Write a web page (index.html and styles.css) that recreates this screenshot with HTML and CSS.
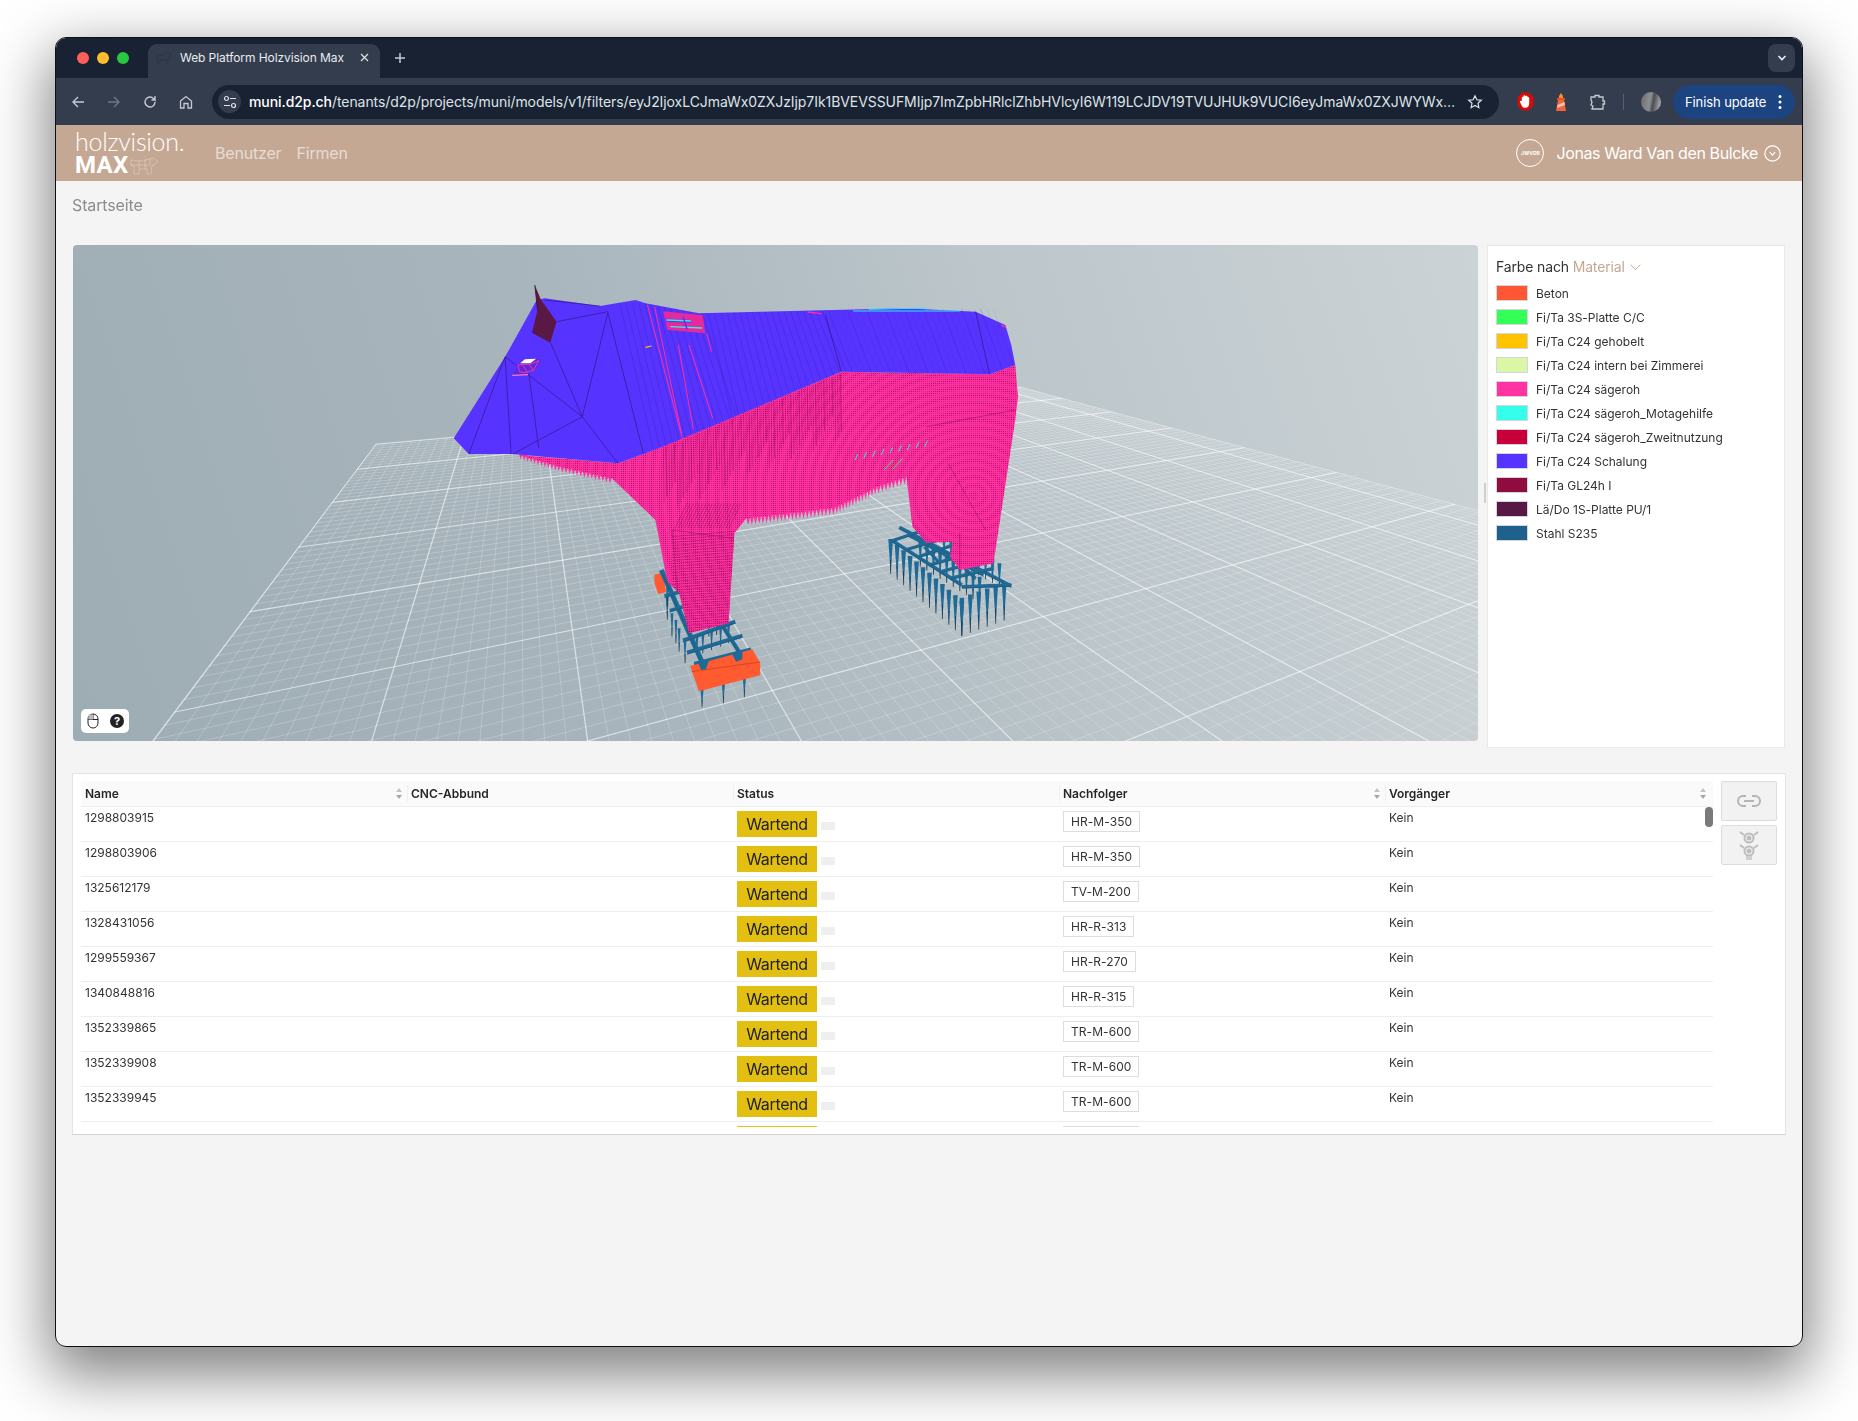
FILE: index.html
```html
<!DOCTYPE html>
<html lang="de">
<head>
<meta charset="utf-8">
<title>Web Platform Holzvision Max</title>
<link rel="stylesheet" href="styles.css">
</head>
<body>
<div class="window">
  <div class="tabstrip">
    <div class="lights"><i class="light red"></i><i class="light yellow"></i><i class="light green"></i></div>
    <div class="tab">
      <svg class="favicon" width="17" height="12" viewBox="0 0 17 12"><path d="M1 3h8l2-2h4l1 3-3 2v5h-2V8H5v3H3V6L1 5z" fill="none" stroke="#2b3442" stroke-width="1"/></svg>
      <span class="tab-title">Web Platform Holzvision Max</span>
      <svg class="tab-close" width="9" height="9" viewBox="0 0 9 9"><path d="M1 1l7 7M8 1l-7 7" stroke="#dfe3e8" stroke-width="1.2"/></svg>
    </div>
    <svg class="newtab" width="12" height="12" viewBox="0 0 12 12"><path d="M6 1v10M1 6h10" stroke="#c4cad3" stroke-width="1.5"/></svg>
    <div class="tab-menu"><svg width="10" height="6" viewBox="0 0 10 6"><path d="M1.5 1L5 4.5 8.500 1" fill="none" stroke="#e8ebef" stroke-width="1.600"/></svg></div>
  </div>
  <div class="toolbar">
    <div class="navs">
      <svg width="16" height="16" viewBox="0 0 16 16"><path d="M14 8H3M8 3L3 8l5 5" fill="none" stroke="#c4cad3" stroke-width="1.400"/></svg>
      <svg width="16" height="16" viewBox="0 0 16 16"><path d="M2 8h11M8 3l5 5-5 5" fill="none" stroke="#6f7886" stroke-width="1.400"/></svg>
      <svg width="16" height="16" viewBox="0 0 16 16"><path d="M13 8a5 5 0 1 1-1.500-3.600L13 6V2M13 6H9.500" fill="none" stroke="#c4cad3" stroke-width="1.400"/></svg>
      <svg width="16" height="16" viewBox="0 0 16 16"><path d="M2.500 7L8 2.500 13.500 7v7H10V9.500H6V14H2.500z" fill="none" stroke="#c4cad3" stroke-width="1.300"/></svg>
    </div>
    <div class="omnibox">
      <span class="tune"><svg width="14" height="14" viewBox="0 0 14 14"><circle cx="3.500" cy="3.500" r="2" fill="none" stroke="#dfe3e8" stroke-width="1.200"/><path d="M7 3.500h6M1 10.500h6" stroke="#dfe3e8" stroke-width="1.200"/><circle cx="10.500" cy="10.500" r="2" fill="none" stroke="#dfe3e8" stroke-width="1.200"/></svg></span>
      <span class="url"><b>muni.d2p.ch</b>/tenants/d2p/projects/muni/models/v1/filters/eyJ2IjoxLCJmaWx0ZXJzIjp7Ik1BVEVSSUFMIjp7ImZpbHRlclZhbHVlcyI6W119LCJDV19TVUJHUk9VUCI6eyJmaWx0ZXJWYWx…</span>
      <svg class="star" width="16" height="16" viewBox="0 0 16 16"><path d="M8 1.800l1.900 4 4.400.5-3.300 3 .9 4.400L8 11.500l-3.900 2.200.9-4.400-3.300-3 4.400-.5z" fill="none" stroke="#dfe3e8" stroke-width="1.200"/></svg>
    </div>
    <div class="extensions">
      <svg width="17" height="19" viewBox="0 0 16 18"><path d="M5 .5h6L15.500 5v8L11 17.500H5L.5 13V5z" fill="#d80a0a"/><path d="M4.500 8.500V5.500a1 1 0 0 1 1.500-.8V4a1 1 0 0 1 2 0v.5a1 1 0 0 1 2 0V5a1 1 0 0 1 1.500.5V11c0 2.500-1.300 4-3.500 4s-3-1-4-3L2.800 9.500c-.4-1 1-1.800 1.700-1z" fill="#fff"/></svg>
      <svg width="14" height="20" viewBox="0 0 14 20"><path d="M7 1l2 3v2H5V4z" fill="#f7941d"/><rect x="3" y="6" width="8" height="2" fill="#e8502a"/><path d="M4 8h6l2 11H2z" fill="#f2643a"/><path d="M3.500 13l7-3 .5 3-8 3z" fill="#fbc4ae"/></svg>
      <svg width="18" height="18" viewBox="0 0 18 18"><path d="M3 4h4V2.500h4V4h4v4h1.500v3H15v5H4l1-3-2-1 1-3-1-2z" fill="none" stroke="#c4cad3" stroke-width="1.300"/></svg>
      <i class="divider"></i>
      <span class="profile"></span>
      <span class="update">Finish update<svg width="4" height="16" viewBox="0 0 4 16"><circle cx="2" cy="2.500" r="1.500" fill="#fff"/><circle cx="2" cy="8" r="1.500" fill="#fff"/><circle cx="2" cy="13.500" r="1.500" fill="#fff"/></svg></span>
    </div>
  </div>
  <header class="appbar">
    <div class="logo">
      <span class="logo-top">holzvision.</span>
      <span class="logo-bottom">MAX<svg width="30" height="18" viewBox="0 0 30 18"><path d="M1 3l8 1 6-1 5-1 3-1 3 2 2 2-4 3-2 0-1 9h-4v-5H9v5H4V9L1 8zM9 4v8M15 3v9M20 2v6M1 8h19" fill="none" stroke="#fff" stroke-opacity=".5" stroke-width=".7" stroke-dasharray="2 .6"/></svg></span>
    </div>
    <nav class="appnav"><a>Benutzer</a><a>Firmen</a></nav>
    <div class="user">
      <span class="avatar">JWVDB</span>
      <span class="username">Jonas Ward Van den Bulcke</span>
      <svg width="17" height="17" viewBox="0 0 17 17"><circle cx="8.500" cy="8.500" r="7.700" fill="none" stroke="#fff" stroke-width="1.200"/><path d="M5.800 7.200l2.700 3 2.700-3" fill="none" stroke="#fff" stroke-width="1.200"/></svg>
    </div>
  </header>
  <main class="main">
    <div class="crumb">Startseite</div>
    <section class="workspace">
      <div class="viewer">
        <canvas id="scene" width="1405" height="496"></canvas>
        <div class="viewer-help">
          <svg width="12" height="16" viewBox="0 0 12 16"><rect x="1" y="1" width="10" height="14" rx="5" fill="#fff" stroke="#222" stroke-width="1"/><path d="M1 6.500h10M6 1v5.500" stroke="#222" stroke-width="1"/><rect x="1.500" y="1.500" width="4.500" height="5" fill="#bbb"/></svg>
          <span class="help-dot">?</span>
        </div>
      </div>
      <div class="splitter"><i></i></div>
      <aside class="legend">
        <div class="legend-head">Farbe nach <span class="legend-pick">Material</span><svg width="11" height="7" viewBox="0 0 11 7"><path d="M.7.700l4.800 5 4.800-5" fill="none" stroke="#c5a893" stroke-width="1"/></svg></div>
        <ul class="legend-list">
          <li><i class="swatch c1"></i>Beton</li>
          <li><i class="swatch c2"></i>Fi/Ta 3S-Platte C/C</li>
          <li><i class="swatch c3"></i>Fi/Ta C24 gehobelt</li>
          <li><i class="swatch c4"></i>Fi/Ta C24 intern bei Zimmerei</li>
          <li><i class="swatch c5"></i>Fi/Ta C24 sägeroh</li>
          <li><i class="swatch c6"></i>Fi/Ta C24 sägeroh_Motagehilfe</li>
          <li><i class="swatch c7"></i>Fi/Ta C24 sägeroh_Zweitnutzung</li>
          <li><i class="swatch c8"></i>Fi/Ta C24 Schalung</li>
          <li><i class="swatch c9"></i>Fi/Ta GL24h I</li>
          <li><i class="swatch c10"></i>Lä/Do 1S-Platte PU/1</li>
          <li><i class="swatch c11"></i>Stahl S235</li>
        </ul>
      </aside>
    </section>
    <section class="table-panel">
      <div class="table">
        <div class="thead">
          <div class="th">Name<i class="sort"></i></div>
          <div class="th">CNC-Abbund</div>
          <div class="th">Status</div>
          <div class="th">Nachfolger<i class="sort"></i></div>
          <div class="th">Vorgänger<i class="sort"></i></div>
        </div>
        <div class="tbody">
          <div class="tr"><div class="td">1298803915</div><div class="td"></div><div class="td status"><span class="wait">Wartend</span><i class="stub"></i></div><div class="td"><span class="code">HR-M-350</span></div><div class="td">Kein</div></div>
          <div class="tr"><div class="td">1298803906</div><div class="td"></div><div class="td status"><span class="wait">Wartend</span><i class="stub"></i></div><div class="td"><span class="code">HR-M-350</span></div><div class="td">Kein</div></div>
          <div class="tr"><div class="td">1325612179</div><div class="td"></div><div class="td status"><span class="wait">Wartend</span><i class="stub"></i></div><div class="td"><span class="code">TV-M-200</span></div><div class="td">Kein</div></div>
          <div class="tr"><div class="td">1328431056</div><div class="td"></div><div class="td status"><span class="wait">Wartend</span><i class="stub"></i></div><div class="td"><span class="code">HR-R-313</span></div><div class="td">Kein</div></div>
          <div class="tr"><div class="td">1299559367</div><div class="td"></div><div class="td status"><span class="wait">Wartend</span><i class="stub"></i></div><div class="td"><span class="code">HR-R-270</span></div><div class="td">Kein</div></div>
          <div class="tr"><div class="td">1340848816</div><div class="td"></div><div class="td status"><span class="wait">Wartend</span><i class="stub"></i></div><div class="td"><span class="code">HR-R-315</span></div><div class="td">Kein</div></div>
          <div class="tr"><div class="td">1352339865</div><div class="td"></div><div class="td status"><span class="wait">Wartend</span><i class="stub"></i></div><div class="td"><span class="code">TR-M-600</span></div><div class="td">Kein</div></div>
          <div class="tr"><div class="td">1352339908</div><div class="td"></div><div class="td status"><span class="wait">Wartend</span><i class="stub"></i></div><div class="td"><span class="code">TR-M-600</span></div><div class="td">Kein</div></div>
          <div class="tr"><div class="td">1352339945</div><div class="td"></div><div class="td status"><span class="wait">Wartend</span><i class="stub"></i></div><div class="td"><span class="code">TR-M-600</span></div><div class="td">Kein</div></div>
          <div class="tr"><div class="td"></div><div class="td"></div><div class="td status"><span class="wait"></span></div><div class="td"><span class="code empty"></span></div><div class="td"></div></div>
          <i class="thumb"></i>
        </div>
      </div>
      <div class="tools">
        <button class="tool"><svg width="24" height="12" viewBox="0 0 24 12"><path d="M9 1H6a5 5 0 0 0 0 10h3M15 1h3a5 5 0 0 1 0 10h-3M7 6h10" fill="none" stroke="#b4b4b4" stroke-width="2"/></svg></button>
        <button class="tool"><svg width="20" height="32" viewBox="0 0 20 32"><g fill="none" stroke="#bdbdbd"><circle cx="10" cy="9" r="4.500" stroke-width="2"/><circle cx="10" cy="22" r="4.500" stroke-width="2"/><path d="M1 3l4 3M19 3l-4 3M1 16l4 3M19 16l-4 3" stroke-width="2"/></g><circle cx="10" cy="9" r="2.500" fill="#bdbdbd"/><circle cx="10" cy="22" r="2.500" fill="#bdbdbd"/><rect x="7" y="27" width="6" height="4" fill="#cfcfcf"/></svg></button>
      </div>
    </section>
  </main>
</div>
<script src="script.js"></script>
</body>
</html>
```
FILE: styles.css
```css
* { box-sizing: border-box; }
html, body { margin: 0; height: 100%; }
body {
  background: #fff;
  font-family: Inter, "Liberation Sans", sans-serif;
  padding: 37px 55px 0;
  overflow: hidden;
}
.window {
  width: 1748px;
  height: 1310px;
  border: 1px solid #0d1117;
  border-radius: 11px;
  overflow: hidden;
  background: #f4f4f4;
  display: flex;
  flex-direction: column;
}
body::before {
  content: "";
  position: fixed;
  left: 55px; top: 37px;
  width: 1748px; height: 1310px;
  border-radius: 11px;
  box-shadow: 0 22px 60px 6px rgba(0,0,0,.5);
  z-index: -1;
}

/* browser chrome */
.tabstrip { height: 40px; background: #182232; display: flex; align-items: flex-end; flex: none; position: relative; }
.lights { display: flex; gap: 7.500px; padding: 0 0 14px 20.500px; width: 92px; align-self: flex-end; }
.light { width: 12.500px; height: 12.500px; border-radius: 50%; flex: none; }
.red { background: #ff5f57; } .yellow { background: #febc2e; } .green { background: #28c840; }
.tab { width: 232px; height: 34px; background: #343d4e; border-radius: 9px 9px 0 0; display: flex; align-items: center; padding: 0 0 7px 7px; position: relative; }
.favicon { flex: none; }
.tab-title { color: #e8ebef; font-size: 12px; margin-left: 8px; white-space: nowrap; width: 172px; letter-spacing: -.08px; }
.tab-close { flex: none; margin-left: 8px; }
.newtab { margin: 0 0 14px 14px; }
.tab-menu { margin: 0 7px 6px auto; width: 27px; height: 28px; background: #343d4e; border-radius: 8px; display: flex; align-items: center; justify-content: center; }
.toolbar { height: 47px; background: #343d4e; display: flex; align-items: center; flex: none; padding-left: 14px; }
.navs { display: flex; gap: 20px; width: 142px; }
.omnibox { width: 1287px; height: 34px; background: #182232; border-radius: 17px; display: flex; align-items: center; padding: 0 16px 0 6px; }
.tune { width: 23px; height: 23px; border-radius: 50%; background: #343d4e; display: flex; align-items: center; justify-content: center; flex: none; }
.url { flex: 1; margin-left: 8px; color: #dfe3e8; font-size: 14px; white-space: nowrap; overflow: hidden; letter-spacing: -.07px; }
.url b { color: #fff; font-weight: 500; }
.star { flex: none; margin-left: 8px; }
.extensions { display: flex; align-items: center; flex: 1; padding-left: 18px; }
.extensions svg:nth-child(2) { margin-left: 20px; }
.extensions svg:nth-child(3) { margin-left: 20px; }
.divider { width: 1px; height: 16px; background: #59616f; margin: 0 17px 0 17px; }
.profile { width: 20px; height: 20px; border-radius: 50%; background: linear-gradient(100deg,#6f6a66,#8c8f96 45%,#4a4d55 60%,#c2c2c2); }
.update { margin-left: 12px; width: 122px; height: 34px; border-radius: 17px; background: #1c4480; color: #fff; font-size: 13px; display: flex; align-items: center; justify-content: space-between; padding: 0 13px 0 12px; white-space: nowrap; letter-spacing: -.1px; }

/* app header */
.appbar { height: 56px; background: #c5a893; display: flex; align-items: center; flex: none; padding: 0 21px 0 19px; color: #fff; }
.logo { display: flex; flex-direction: column; width: 140px; color: #fff; }
.logo-top { font-family: Lato, sans-serif; font-weight: 300; font-size: 25px; line-height: 25px; letter-spacing: -.25px; }
.logo-bottom { font-family: Roboto, sans-serif; font-weight: 700; font-size: 24px; line-height: 23px; display: flex; align-items: center; letter-spacing: .3px; }
.logo-bottom svg { margin-left: 2px; }
.appnav { display: flex; gap: 15px; font-size: 16px; color: rgba(255,255,255,.6); letter-spacing: -.18px; }
.user { margin-left: auto; display: flex; align-items: center; }
.avatar { width: 28px; height: 28px; border-radius: 50%; border: 1.500px solid #fff; font-size: 5px; font-weight: 700; display: flex; align-items: center; justify-content: center; margin-right: 12px; }
.username { font-size: 16px; margin-right: 6px; letter-spacing: -.38px; white-space: nowrap; }

/* main */
.main { flex: 1; padding: 0 16px; display: flex; flex-direction: column; }
.crumb { height: 64px; line-height: 48px; font-size: 16px; color: #8c8c8c; letter-spacing: -.14px; }
.workspace { display: flex; height: 503px; padding: 0 1px; flex: none; }
.viewer { width: 1405px; height: 496px; position: relative; border-radius: 4px; overflow: hidden; background: linear-gradient(72deg, #9eacb4 0%, #a8b5bc 38%, #bcc6cb 68%, #ccd3d6 100%); flex: none; }
#scene { display: block; }
.viewer-help { position: absolute; left: 8px; bottom: 8px; width: 48px; height: 24px; background: #fff; border-radius: 5px; display: flex; align-items: center; justify-content: space-between; padding: 0 5px 0 6px; }
.help-dot { width: 14px; height: 14px; border-radius: 50%; background: #222; color: #fff; font-size: 11px; font-weight: 700; line-height: 14px; text-align: center; }
.splitter { width: 9px; display: flex; align-items: center; flex: none; height: 496px; }
.splitter i { width: 2px; height: 20px; background: #cfcfcf; margin-left: 6px; margin-top: -1px; }
.legend { flex: 1; background: #fff; border: 1px solid #e9e9e9; padding: 11px 8px 0; }
.legend-head { font-size: 14px; color: #333; line-height: 20px; display: flex; align-items: center; white-space: pre; letter-spacing: -.15px; }
.legend-pick { color: #c5a893; }
.legend-head svg { margin-left: 5px; }
.legend-list { list-style: none; margin: 4px 0 0; padding: 0; }
.legend-list li { height: 24px; display: flex; align-items: center; font-size: 12px; color: #333; white-space: nowrap; letter-spacing: -.01px; }
.swatch { width: 32px; height: 16px; border: 1px solid #d3d6de; margin-right: 8px; flex: none; }
.c1 { background: #ff5733; } .c2 { background: #33ff57; } .c3 { background: #ffc300; } .c4 { background: #daf7a6; }
.c5 { background: #ff33a1; } .c6 { background: #33ffec; } .c7 { background: #c70039; } .c8 { background: #5733ff; }
.c9 { background: #900c3f; } .c10 { background: #581845; } .c11 { background: #1f618d; }

/* table */
.table-panel { margin-top: 25px; height: 362px; width: 1714px; background: #fff; border: 1px solid #e3e3e3; border-bottom-color: #d2d2d6; padding: 7px 7px 0 8px; display: flex; flex: none; }
.table { width: 1632px; flex: none; }
.thead { height: 26px; display: grid; grid-template-columns: repeat(5, 326px); background: #fafafa; border-bottom: 1px solid #eee; width: 1632px; }
.th { position: relative; font-size: 12px; font-weight: 600; color: #262626; padding: 0 4px; line-height: 25px; }
.th + .th::before { content: ""; position: absolute; left: 0; top: 4px; height: 17px; width: 1px; background: #f0f0f0; }
.sort { position: absolute; right: 4.500px; top: 7px; width: 7px; height: 11px; }
.sort::before, .sort::after { content: ""; position: absolute; left: 0; border-left: 3.500px solid transparent; border-right: 3.500px solid transparent; }
.sort::before { top: 0; border-bottom: 4px solid #c4c4c4; }
.sort::after { bottom: 0; border-top: 4px solid #a8a8a8; }
.tbody { height: 320px; overflow: hidden; position: relative; }
.tr { height: 35px; display: grid; grid-template-columns: repeat(5, 326px); border-bottom: 1px solid #eee; }
.td { font-size: 12px; color: #333; padding: 3px 4px 0; line-height: 16px; }
.status { display: flex; align-items: flex-start; padding-top: 4px; }
.wait { width: 80px; height: 26px; background: #e3bf12; color: #222; font-size: 16px; line-height: 26px; text-align: center; display: block; letter-spacing: -.32px; }
.stub { width: 14px; height: 8px; background: #efefef; margin: 11px 0 0 4px; }
.code { display: inline-block; height: 21px; margin-top: 1px; padding: 0 7px; border: 1px solid #ddd; line-height: 19px; letter-spacing: .06px; }
.code.empty { width: 76px; }
.thumb { position: absolute; right: 0; top: 0; width: 8px; height: 20px; background: #7a7a7a; border-radius: 4px; }
.tools { display: flex; flex-direction: column; gap: 4px; margin-left: 8px; }
.tool { width: 56px; height: 40px; background: #f2f2f2; border: 1px solid #dcdcdc; border-radius: 2px; padding: 0; display: flex; align-items: center; justify-content: center; }
```
FILE: script.js
```js
(function () {
  var cv = document.getElementById('scene');
  var g = cv.getContext('2d');
  var OX = 73, OY = 245;
  var VPV = [520, 252], VPU = [2298, 274];
  var A = [376, 444], B = [1020, 387];
  var W = cv.width, H = cv.height;

  function pg(p) { return [p[0] - OX, p[1] - OY]; }
  // reference model coordinates -> canvas
  function M(x, y) { return [357 + x / 2.529, 25 + y / 3]; }
  function pathOf(pts) {
    g.beginPath();
    pts.forEach(function (p, i) { var c = M(p[0], p[1]); if (i) g.lineTo(c[0], c[1]); else g.moveTo(c[0], c[1]); });
    g.closePath();
  }
  function fill(pts, col) { pathOf(pts); g.fillStyle = col; g.fill(); }
  function line(a, b, col, w) {
    var p = M(a[0], a[1]), q = M(b[0], b[1]);
    g.beginPath(); g.moveTo(p[0], p[1]); g.lineTo(q[0], q[1]);
    g.strokeStyle = col; g.lineWidth = w; g.stroke();
  }

  /* ---- floor grid ---- */
  function leftPoint(v) {
    var y = 252 + 1 / (0.005208 - 0.000607 * v);
    var x = 376 - 0.753 * (y - 444);
    return [x, y];
  }
  function backPoint(u) {
    var x = 2298 - 1 / (0.00052029 + 0.000025 * u);
    return [x, 444 - 0.0885 * (x - 376)];
  }
  function ray(vp, through, col, w) {
    var dx = through[0] - vp[0], dy = through[1] - vp[1];
    var a = pg(vp), k = 8000 / Math.hypot(dx, dy);
    g.beginPath();
    g.moveTo(a[0], a[1]);
    g.lineTo(a[0] + dx * k, a[1] + dy * k);
    g.strokeStyle = col; g.lineWidth = w; g.stroke();
  }
  g.save();
  var pA = pg(A), pB = pg(B);
  g.beginPath();
  g.moveTo(pA[0], pA[1]);
  g.lineTo(pB[0], pB[1]);
  g.lineTo(pB[0] + 3.7 * 500, pB[1] + 500);
  g.lineTo(pB[0] + 3.7 * 500, H + 400);
  g.lineTo(pA[0] - 0.753 * 500, pA[1] + 500);
  g.closePath();
  g.clip();
  var i, major, MINOR = 'rgba(255,255,255,.27)', MAJOR = 'rgba(255,255,255,.6)';
  for (i = 0; i <= 110; i++) {
    major = i % 10 === 0;
    ray(VPV, backPoint(i / 10), major ? MAJOR : MINOR, major ? 1.2 : 0.8);
  }
  for (i = 0; i <= 80; i++) {
    var v = i / 10;
    if (0.005208 - 0.000607 * v <= 0.0005) break;
    major = i % 10 === 0;
    ray(VPU, leftPoint(v), major ? MAJOR : MINOR, major ? 1.2 : 0.8);
  }
  g.restore();
  g.beginPath(); g.moveTo(pA[0], pA[1]); g.lineTo(pA[0] - 0.753 * 320, pA[1] + 320);
  g.moveTo(pA[0], pA[1]); g.lineTo(pB[0], pB[1]); g.lineTo(pB[0] + 3.7 * 130, pB[1] + 130);
  g.strokeStyle = 'rgba(255,255,255,.45)'; g.lineWidth = 0.8; g.stroke();

  /* ---- steel and concrete ---- */
  var STEEL = '#1f6a96', STEEL2 = '#1a5a80';
  function spike(x, top, tip, w) {
    fill([[x - w, top], [x + w, top], [x, tip]], STEEL);
    line([x, top + (tip - top) * 0.6], [x, tip], 'rgba(18,34,46,.8)', 0.8);
  }
  function beam(a, b, w) {
    line(a, b, STEEL, w);
    line([a[0], a[1] + 4], [b[0], b[1] + 4], STEEL2, 0.8);
  }
  function spikesAlong(a, b, n, len, w) {
    for (var k = 0; k <= n; k++) {
      var t = k / n, x = a[0] + (b[0] - a[0]) * t, y = a[1] + (b[1] - a[1]) * t;
      spike(x, y - len, y, w);
    }
  }
  // orange block behind front leg
  fill([[567, 914], [588, 908], [597, 966], [577, 972], [568, 940]], '#ff5a30');

  // back foot
  spikesAlong([1240, 890], [1390, 1000], 9, 80, 5);
  spikesAlong([1300, 860], [1440, 950], 8, 70, 5);
  spikesAlong([1165, 912], [1345, 1098], 11, 105, 6);
  spikesAlong([1345, 1098], [1452, 1052], 5, 115, 6);
  beam([1187, 772], [1470, 948], 3.5);
  beam([1170, 812], [1345, 945], 3.5);
  beam([1210, 795], [1400, 915], 3);
  beam([1168, 812], [1262, 775], 3);
  beam([1205, 838], [1300, 805], 3);
  beam([1235, 860], [1330, 822], 3);
  beam([1262, 885], [1365, 850], 3);
  beam([1290, 905], [1395, 872], 3);
  beam([1315, 925], [1425, 895], 3);
  beam([1345, 950], [1470, 945], 3.5);
  beam([1250, 830], [1290, 880], 3);
  beam([1340, 880], [1380, 925], 3);

  // front foot
  [[600, 1050], [612, 1100], [630, 1145], [645, 1180], [600, 1010], [622, 1120]].forEach(function (t) { spike(t[0], t[1] - 70, t[1], 3.5); });
  [[675, 1155], [690, 1150], [712, 1140], [735, 1130], [755, 1120], [705, 1100], [725, 1095]].forEach(function (t) { spike(t[0], t[1] - 55, t[1], 3.5); });
  beam([585, 900], [695, 1195], 5);
  beam([735, 1058], [792, 1165], 4);
  beam([640, 1112], [772, 1055], 4);
  beam([650, 1148], [790, 1097], 4);
  beam([668, 1182], [812, 1138], 4);
  beam([593, 978], [630, 966], 3.5);
  beam([606, 1022], [640, 1010], 3.5);
  spike(688, 1255, 1312, 4); spike(742, 1240, 1300, 4); spike(795, 1222, 1282, 4);
  fill([[658, 1188], [815, 1138], [835, 1178], [835, 1216], [680, 1264]], '#ff5a30');
  line([662, 1205], [834, 1176], 'rgba(170,50,20,.7)', 0.7);
  fill([[678, 1178], [705, 1172], [698, 1198], [686, 1200]], STEEL);
  fill([[764, 1152], [790, 1142], [790, 1168], [774, 1175]], STEEL);

  /* ---- pink hull ---- */
  var PINK = '#ff2f9f';
  var hull = [[225, 555], [475, 580], [540, 552], [1040, 305], [1415, 313], [1480, 285], [1487, 380], [1480, 450], [1425, 880], [1340, 900], [1315, 860], [1322, 815], [1255, 818], [1220, 770], [1205, 620], [1130, 650], [1025, 712], [940, 725], [800, 745], [770, 790], [755, 1060], [655, 1090], [630, 970], [600, 935], [570, 750], [460, 625], [330, 590]];
  function teeth(a, b, step, len) {
    var d = Math.hypot(b[0] - a[0], b[1] - a[1]), n = Math.floor(d / step), k;
    for (k = 0; k < n; k++) {
      var t0 = k / n, t1 = (k + 1) / n;
      var x0 = a[0] + (b[0] - a[0]) * t0, y0 = a[1] + (b[1] - a[1]) * t0;
      var x1 = a[0] + (b[0] - a[0]) * t1, y1 = a[1] + (b[1] - a[1]) * t1;
      fill([[x0, y0 - 3], [x1, y1 - 3], [(x0 + x1) / 2, (y0 + y1) / 2 + len]], PINK);
    }
  }
  teeth([225, 552], [330, 590], 9, 16);
  teeth([330, 590], [460, 625], 9, 16);
  teeth([800, 745], [940, 725], 9, 22);
  teeth([940, 725], [1025, 712], 9, 22);
  teeth([1025, 712], [1130, 650], 9, 22);
  teeth([1130, 650], [1205, 620], 9, 22);
  fill(hull, PINK);

  // fine moire dots: every other pixel, strength varying in tight concentric rings
  var layer = document.createElement('canvas');
  layer.width = W; layer.height = H;
  var lg = layer.getContext('2d');
  var img = lg.createImageData(W, H), d = img.data;
  for (var y = 100; y < 440; y++) {
    for (var x = 340; x < 960; x++) {
      if (x % 2 !== 0 || y % 2 !== 0) continue;
      var ring = Math.sin(Math.hypot(x - 900, (y - 250) * 1.15) / 1.5);
      var o = (y * W + x) * 4;
      d[o] = 112; d[o + 1] = 8; d[o + 2] = 70; d[o + 3] = Math.round(110 + 55 * ring);
    }
  }
  lg.putImageData(img, 0, 0);
  g.save();
  pathOf(hull);
  g.clip();
  g.drawImage(layer, 0, 0);
  // vertical slats on the flank
  for (var sx = 590; sx < 1040; sx += 7) {
    var top = 560 - (sx - 540) * 0.5;
    var len = 110 + ((sx * 37) % 90);
    line([sx, top], [sx + 2, top + len], 'rgba(140,10,90,.5)', sx % 3 === 0 ? 1.1 : 0.6);
  }
  // front leg layering
  for (var ly = 790; ly < 1090; ly += 9) {
    line([612, ly + 10], [770, ly - 6], 'rgba(120,8,75,.5)', 0.7);
  }
  for (var dg = 0; dg < 18; dg++) {
    line([650 + dg * 8, 700], [620 + dg * 8, 775], 'rgba(120,8,75,.45)', 0.8);
  }
  line([612, 780], [768, 805], 'rgba(110,8,70,.45)', 0.8);
  line([612, 780], [635, 1080], 'rgba(110,8,70,.4)', 0.8);
  line([1255, 470], [1480, 420], 'rgba(110,8,70,.45)', 0.8);
  line([1340, 790], [1340, 895], 'rgba(110,8,70,.55)', 0.8);
  line([1310, 580], [1405, 780], 'rgba(110,8,70,.45)', 0.8);
  // cyan / green fragments
  for (var c = 0; c < 9; c++) {
    line([1075 + c * 22, 570 - c * 5], [1082 + c * 22, 552 - c * 5], '#31e8df', 1);
  }
  line([1148, 600], [1172, 570], '#37e86a', 1);
  line([1170, 598], [1195, 565], '#37e86a', 1);
  g.restore();

  /* ---- purple roof ---- */
  var PURPLE = '#5733ff';
  var roof = [[60, 505], [98, 552], [210, 552], [475, 580], [540, 552], [605, 522], [740, 455], [1040, 305], [1415, 313], [1480, 285], [1470, 225], [1455, 165], [1380, 125], [1200, 115], [680, 130], [545, 100], [520, 90], [430, 108], [290, 85], [270, 90], [190, 260]];
  fill(roof, PURPLE);
  var EDGE = 'rgba(40,10,90,.7)';
  [[[98, 552], [190, 260]], [[205, 552], [190, 260]], [[190, 260], [385, 440]], [[305, 218], [385, 440]], [[385, 440], [210, 552]], [[385, 440], [475, 580]], [[385, 440], [450, 128]], [[450, 128], [540, 552]], [[320, 155], [450, 125]], [[250, 310], [275, 535]], [[290, 90], [430, 108]], [[1040, 305], [1000, 135]], [[1415, 313], [1380, 125]]].forEach(function (s) { line(s[0], s[1], EDGE, 0.7); });
  var lower = function (x) { return x < 1040 ? 552 - (x - 540) * 0.494 : 305 + (x - 1040) * 0.02; };
  for (var rx = 480; rx < 1440; rx += 16) {
    var topy = rx < 680 ? 100 + (rx - 545) * 0.22 : 130 - (rx - 680) * 0.02;
    var end = rx + 60 + (rx < 700 ? 25 : 0);
    line([rx, Math.max(topy, 100)], [end, lower(end)], rx > 1000 && rx % 48 !== 0 ? 'rgba(40,10,90,.1)' : 'rgba(40,10,90,.3)', 0.6);
  }
  [[[550, 105], [640, 515]], [[568, 110], [636, 490]], [[628, 225], [666, 478]], [[655, 225], [715, 445]], [[700, 190], [712, 245]]].forEach(function (s) { line(s[0], s[1], PINK, 1); });
  fill([[590, 124], [690, 136], [696, 190], [600, 180]], '#e62a9d');
  fill([[596, 146], [660, 150], [662, 158], [598, 156]], PURPLE);
  line([598, 150], [660, 153], '#31f0e0', 1.4);
  line([608, 170], [688, 174], '#31f0e0', 1.4);
  line([640, 140], [650, 178], PURPLE, 1.5);
  line([955, 126], [990, 131], PINK, 1.4);
  line([1070, 123], [1340, 123], '#31e8ea', 1.2);
  line([1110, 118], [1255, 114], '#31e8ea', 1);
  line([1445, 165], [1457, 172], PINK, 1.4);
  line([545, 232], [560, 228], '#ffc300', 1.2);

  // eye
  fill([[226, 280], [240, 267], [282, 268], [268, 298], [238, 312], [208, 318]], '#5a2ae0');
  fill([[228, 280], [240, 268], [268, 266], [254, 280]], '#ffffff');
  pathOf([[222, 285], [255, 282], [275, 272], [262, 300], [240, 308], [226, 305]]);
  g.strokeStyle = PINK; g.lineWidth = 1; g.stroke();
  line([235, 285], [247, 310], PINK, 1);
  line([250, 282], [262, 302], PINK, 1);
  line([208, 316], [248, 314], '#ff7ac4', 1.2);

  // ear
  fill([[265, 45], [280, 88], [320, 155], [304, 218], [258, 188], [272, 120]], '#5a1845');
  line([265, 45], [272, 120], '#3a0d30', 0.8);
})();
```
